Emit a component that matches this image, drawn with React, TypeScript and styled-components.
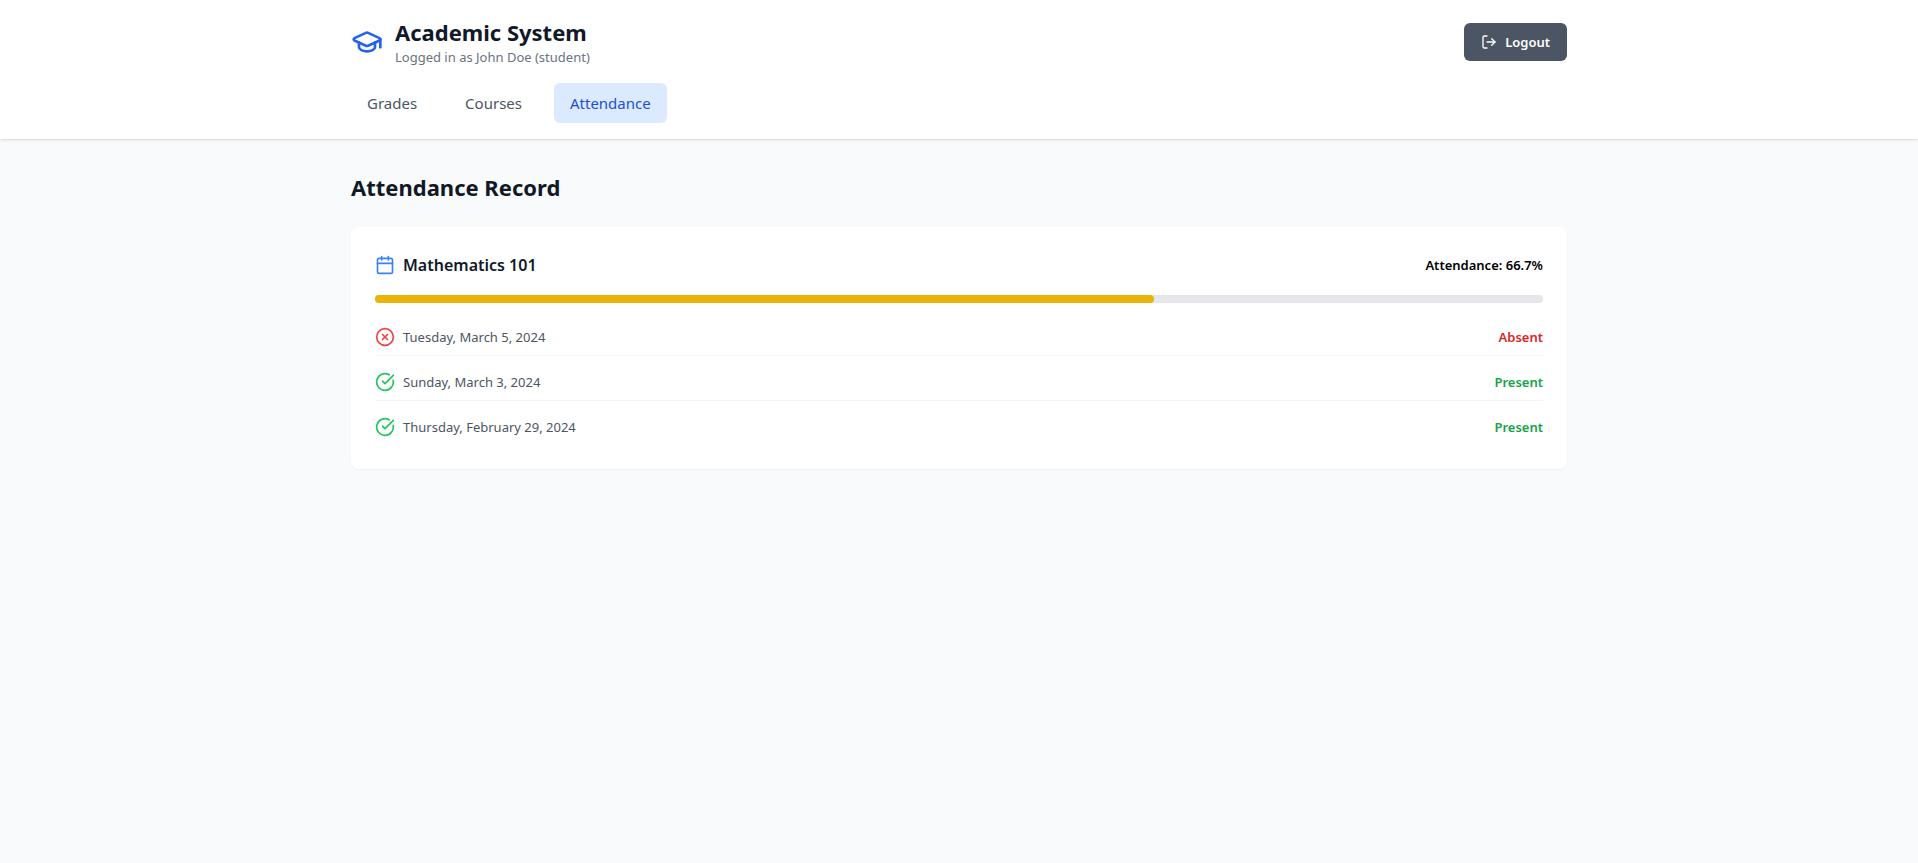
import React from 'react';
import styled, { createGlobalStyle } from 'styled-components';
import { Calendar, CircleCheckBig, CircleX, GraduationCap, LogOut } from 'lucide-react';

const GlobalStyle = createGlobalStyle`
  *, *::before, *::after { box-sizing: border-box; }
  body {
    margin: 0;
    background: #f9fafb;
    color: #000;
    font-family: "Segoe UI", "Noto Sans", sans-serif;
    font-size: 13px;
    line-height: 20px;
  }
  h1, h2, h3, p, ul { margin: 0; padding: 0; }
  svg { display: block; flex-shrink: 0; }
`;

const Page = styled.div`
  min-height: 100vh;
`;

const Header = styled.header`
  background: #fff;
  box-shadow: 0 1px 3px rgba(0, 0, 0, 0.1), 0 1px 2px -1px rgba(0, 0, 0, 0.1);
`;

const Container = styled.div`
  max-width: 1280px;
  margin: 0 auto;
  padding: 16px 32px;
`;

const TopRow = styled.div`
  display: flex;
  align-items: center;
  justify-content: space-between;
`;

const Brand = styled.div`
  display: flex;
  align-items: center;
  gap: 12px;
  color: #2563eb;
`;

const Title = styled.h1`
  color: #111827;
  font-size: 22px;
  font-weight: 700;
  line-height: 32px;
`;

const Subtitle = styled.p`
  color: #6b7280;
  font-size: 13px;
  line-height: 19px;
`;

const LogoutButton = styled.button`
  display: flex;
  align-items: center;
  gap: 8px;
  padding: 8px 16px;
  border: 1px solid transparent;
  border-radius: 6px;
  background: #4b5563;
  color: #fff;
  font: inherit;
  font-weight: 600;
  cursor: pointer;
`;

const Nav = styled.nav`
  display: flex;
  gap: 16px;
  margin-top: 16px;
`;

const NavLink = styled.a<{ $active?: boolean }>`
  padding: 8px 16px;
  border-radius: 6px;
  background: ${({ $active }) => ($active ? '#dbeafe' : 'transparent')};
  color: ${({ $active }) => ($active ? '#1d4ed8' : '#4b5563')};
  font-size: 15px;
  line-height: 24px;
  text-decoration: none;
`;

const Main = styled.main`
  display: flex;
  flex-direction: column;
  gap: 24px;
  max-width: 1280px;
  margin: 0 auto;
  padding: 32px;
`;

const PageTitle = styled.h2`
  color: #111827;
  font-size: 22px;
  font-weight: 700;
  line-height: 32px;
`;

const Card = styled.section`
  padding: 24px;
  border-radius: 8px;
  background: #fff;
  box-shadow: 0 1px 2px rgba(0, 0, 0, 0.05);
`;

const CardHeader = styled.div`
  display: flex;
  align-items: center;
  justify-content: space-between;
  margin-bottom: 16px;
`;

const IconLabel = styled.div<{ $color: string }>`
  display: flex;
  align-items: center;
  gap: 8px;
  color: ${({ $color }) => $color};
`;

const CourseName = styled.h3`
  color: #111827;
  font-size: 16px;
  font-weight: 600;
  line-height: 28px;
`;

const Rate = styled.span`
  font-weight: 600;
`;

const Track = styled.div`
  height: 8px;
  margin-bottom: 16px;
  border-radius: 4px;
  background: #e5e7eb;
`;

const Fill = styled.div`
  height: 100%;
  border-radius: 4px;
  background: #eab308;
`;

const RecordList = styled.ul`
  display: flex;
  flex-direction: column;
  gap: 8px;
  list-style: none;
`;

const RecordRow = styled.li`
  display: flex;
  align-items: center;
  justify-content: space-between;
  padding: 8px 0;
  border-bottom: 1px solid #f3f4f6;

  &:last-child {
    border-bottom: 0;
  }
`;

const RecordDate = styled.span`
  color: #4b5563;
`;

const Status = styled.span<{ $present: boolean }>`
  color: ${({ $present }) => ($present ? '#16a34a' : '#dc2626')};
  font-weight: 600;
`;

const navItems = ['Grades', 'Courses', 'Attendance'];

const records = [
  { date: 'Tuesday, March 5, 2024', present: false },
  { date: 'Sunday, March 3, 2024', present: true },
  { date: 'Thursday, February 29, 2024', present: true },
];

export default function App() {
  const rate = (records.filter((r) => r.present).length / records.length) * 100;

  return (
    <Page>
      <GlobalStyle />
      <Header>
        <Container>
          <TopRow>
            <Brand>
              <GraduationCap size={32} />
              <div>
                <Title>Academic System</Title>
                <Subtitle>Logged in as John Doe (student)</Subtitle>
              </div>
            </Brand>
            <LogoutButton type="button">
              <LogOut size={16} />
              Logout
            </LogoutButton>
          </TopRow>
          <Nav>
            {navItems.map((item) => (
              <NavLink
                key={item}
                href={`#${item.toLowerCase()}`}
                $active={item === 'Attendance'}
                aria-current={item === 'Attendance' ? 'page' : undefined}
              >
                {item}
              </NavLink>
            ))}
          </Nav>
        </Container>
      </Header>
      <Main>
        <PageTitle>Attendance Record</PageTitle>
        <Card>
          <CardHeader>
            <IconLabel $color="#3b82f6">
              <Calendar size={20} />
              <CourseName>Mathematics 101</CourseName>
            </IconLabel>
            <Rate>Attendance: {rate.toFixed(1)}%</Rate>
          </CardHeader>
          <Track role="progressbar" aria-label="Attendance" aria-valuenow={Math.round(rate)}>
            <Fill style={{ width: `${rate}%` }} />
          </Track>
          <RecordList>
            {records.map(({ date, present }) => (
              <RecordRow key={date}>
                <IconLabel $color={present ? '#22c55e' : '#ef4444'}>
                  {present ? <CircleCheckBig size={20} /> : <CircleX size={20} />}
                  <RecordDate>{date}</RecordDate>
                </IconLabel>
                <Status $present={present}>{present ? 'Present' : 'Absent'}</Status>
              </RecordRow>
            ))}
          </RecordList>
        </Card>
      </Main>
    </Page>
  );
}
